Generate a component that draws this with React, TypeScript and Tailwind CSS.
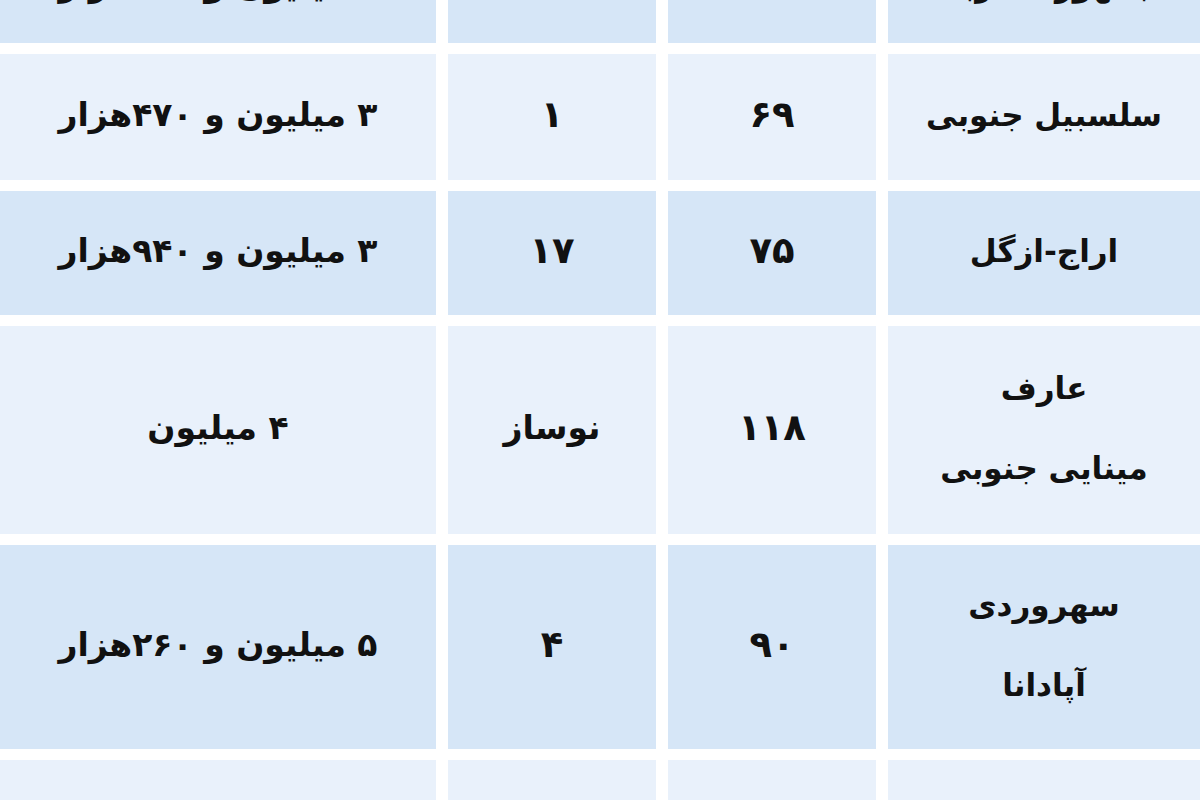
import React from 'react';

type Row = {
  price: string;
  age: string;
  area: string;
  place: string[];
  height: string;
  tone: 'dark' | 'light';
};

const rows: Row[] = [
  { price: '۴ میلیون و ۸۵۰هزار', age: '۱۰', area: '۱۲۰', place: ['جمهوری غربی'], height: 'h-[126px]', tone: 'dark' },
  { price: '۳ میلیون و ۴۷۰هزار', age: '۱', area: '۶۹', place: ['سلسبیل جنوبی'], height: 'h-[126px]', tone: 'light' },
  { price: '۳ میلیون و ۹۴۰هزار', age: '۱۷', area: '۷۵', place: ['اراج-ازگل'], height: 'h-[124px]', tone: 'dark' },
  { price: '۴ میلیون', age: 'نوساز', area: '۱۱۸', place: ['عارف', 'مینایی جنوبی'], height: 'h-[208px]', tone: 'light' },
  { price: '۵ میلیون و ۲۶۰هزار', age: '۴', area: '۹۰', place: ['سهروردی', 'آپادانا'], height: 'h-[204px]', tone: 'dark' },
  { price: '۴ میلیون و ۱۲۰هزار', age: '۸', area: '۸۵', place: ['شهرک غرب'], height: 'h-[126px]', tone: 'light' },
];

const Cell: React.FC<{ tone: 'dark' | 'light'; height: string; first?: boolean; children: React.ReactNode }> = ({
  tone,
  height,
  first,
  children,
}) => (
  <div
    className={`${height} flex flex-col items-center justify-center text-center ${
      tone === 'dark' ? 'bg-[#d6e6f7]' : 'bg-[#e9f1fb]'
    } ${first ? 'pt-[14px]' : ''}`}
  >
    {children}
  </div>
);

export default function App() {
  return (
    <div className="w-[1200px] h-[800px] overflow-hidden bg-white">
      <div
        dir="rtl"
        className="mt-[-83px] grid grid-cols-[312px_208px_208px_436px] gap-x-[12px] gap-y-[11px] font-bold text-[#111111] [font-family:'DejaVu_Sans',sans-serif]"
      >
        {rows.map((r, i) => (
          <React.Fragment key={i}>
            <Cell tone={r.tone} height={r.height} first={i === 0}>
              {r.place.map((line) => (
                <div key={line} className="text-[31px] leading-[84px] mt-[-4px]">
                  {line}
                </div>
              ))}
            </Cell>
            <Cell tone={r.tone} height={r.height} first={i === 0}>
              <div className="text-[37px] mt-[-4px]">{r.area}</div>
            </Cell>
            <Cell tone={r.tone} height={r.height} first={i === 0}>
              <div className={r.age.length > 2 ? 'text-[33px] mt-[-4px]' : 'text-[37px] mt-[-4px]'}>{r.age}</div>
            </Cell>
            <Cell tone={r.tone} height={r.height} first={i === 0}>
              <div className="text-[33px] mt-[-4px]">{r.price}</div>
            </Cell>
          </React.Fragment>
        ))}
      </div>
    </div>
  );
}
